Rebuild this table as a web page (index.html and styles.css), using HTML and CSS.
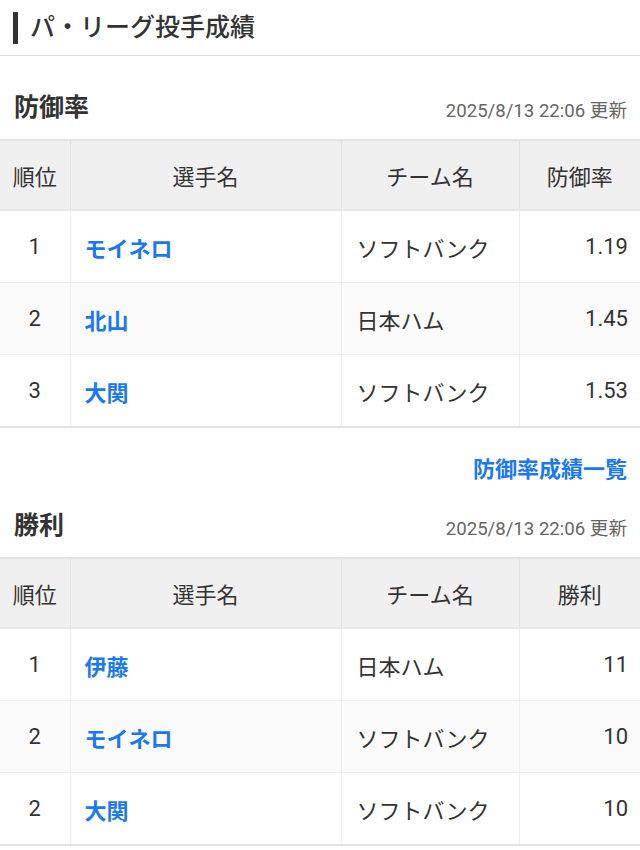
FILE: index.html
```html
<!DOCTYPE html>
<html lang="ja">
<head>
<meta charset="utf-8">
<title>パ・リーグ投手成績</title>
<link rel="stylesheet" href="styles.css">
</head>
<body>
<header class="page-head">
  <h1 class="page-title">パ・リーグ投手成績</h1>
</header>

<section class="sec sec-first">
  <div class="sec-head">
    <h2 class="sec-title">防御率</h2>
    <span class="updated">2025/8/13 22:06 更新</span>
  </div>
  <table class="stats">
    <colgroup>
      <col class="c-rank"><col class="c-name"><col class="c-team"><col class="c-val">
    </colgroup>
    <thead>
      <tr><th>順位</th><th>選手名</th><th>チーム名</th><th>防御率</th></tr>
    </thead>
    <tbody>
      <tr><td class="rank">1</td><td class="name"><a href="#">モイネロ</a></td><td class="team">ソフトバンク</td><td class="val">1.19</td></tr>
      <tr><td class="rank">2</td><td class="name"><a href="#">北山</a></td><td class="team">日本ハム</td><td class="val">1.45</td></tr>
      <tr><td class="rank">3</td><td class="name"><a href="#">大関</a></td><td class="team">ソフトバンク</td><td class="val">1.53</td></tr>
    </tbody>
  </table>
  <div class="more"><a href="#">防御率成績一覧</a></div>
</section>

<section class="sec sec-second">
  <div class="sec-head">
    <h2 class="sec-title">勝利</h2>
    <span class="updated">2025/8/13 22:06 更新</span>
  </div>
  <table class="stats">
    <colgroup>
      <col class="c-rank"><col class="c-name"><col class="c-team"><col class="c-val">
    </colgroup>
    <thead>
      <tr><th>順位</th><th>選手名</th><th>チーム名</th><th>勝利</th></tr>
    </thead>
    <tbody>
      <tr><td class="rank">1</td><td class="name"><a href="#">伊藤</a></td><td class="team">日本ハム</td><td class="val">11</td></tr>
      <tr><td class="rank">2</td><td class="name"><a href="#">モイネロ</a></td><td class="team">ソフトバンク</td><td class="val">10</td></tr>
      <tr><td class="rank">2</td><td class="name"><a href="#">大関</a></td><td class="team">ソフトバンク</td><td class="val">10</td></tr>
    </tbody>
  </table>
</section>
</body>
</html>
```

FILE: styles.css
```css
html, body {
  margin: 0;
  padding: 0;
  background: #fff;
}
body {
  font-family: Roboto, "Noto Sans CJK JP", sans-serif;
  color: #333;
  width: 640px;
}
a {
  color: #1a78f0;
  text-decoration: none;
}

.page-head {
  height: 55px;
  border-bottom: 1px solid #ddd;
  display: flex;
  align-items: center;
  padding-left: 13px;
}
.page-title {
  margin: 0;
  font-size: 25px;
  font-weight: 500;
  line-height: 32px;
  border-left: 5px solid #333;
  padding-left: 12px;
  color: #333;
}

.sec-first {
  padding-top: 21px;
}
.sec-second {
  padding-top: 12px;
}
.sec-head {
  height: 62px;
  display: flex;
  align-items: center;
  justify-content: space-between;
  padding: 0 13px 0 14px;
}
.sec-title {
  margin: 0;
  font-size: 25px;
  font-weight: 700;
  line-height: 32px;
  color: #333;
}
.updated {
  font-size: 18.6px;
  color: #666;
}

.stats {
  width: 640px;
  border-collapse: collapse;
  table-layout: fixed;
  font-size: 22px;
}
.c-rank { width: 70px; }
.c-name { width: 271px; }
.c-team { width: 178px; }
.c-val { width: 121px; }

.stats thead tr {
  background: #f0f0f0;
  border-top: 2px solid #e2e2e2;
  border-bottom: 2px solid #e6e6e6;
}
.stats th {
  height: 68px;
  font-weight: 400;
  text-align: center;
  padding: 0;
  border-left: 1px solid #e2e2e2;
}
.stats th:first-child,
.stats td:first-child {
  border-left: none;
}
.stats td {
  height: 71px;
  padding: 0 14px;
  border-left: 1px solid #eee;
}
.stats tbody tr {
  border-bottom: 1px solid #eee;
}
.stats tbody tr:nth-child(even) {
  background: #fafafa;
}
.stats tbody tr:last-child {
  border-bottom: 2px solid #e2e2e2;
}
.stats td.rank {
  text-align: center;
  padding: 0;
}
.stats td.name {
  font-weight: 700;
}
.stats td.team {
  padding-left: 15px;
}
.stats td.val {
  text-align: right;
  padding-right: 12px;
}

.more {
  text-align: right;
  padding: 29px 13px 0;
  line-height: 26px;
  font-size: 22px;
  font-weight: 700;
}
```
